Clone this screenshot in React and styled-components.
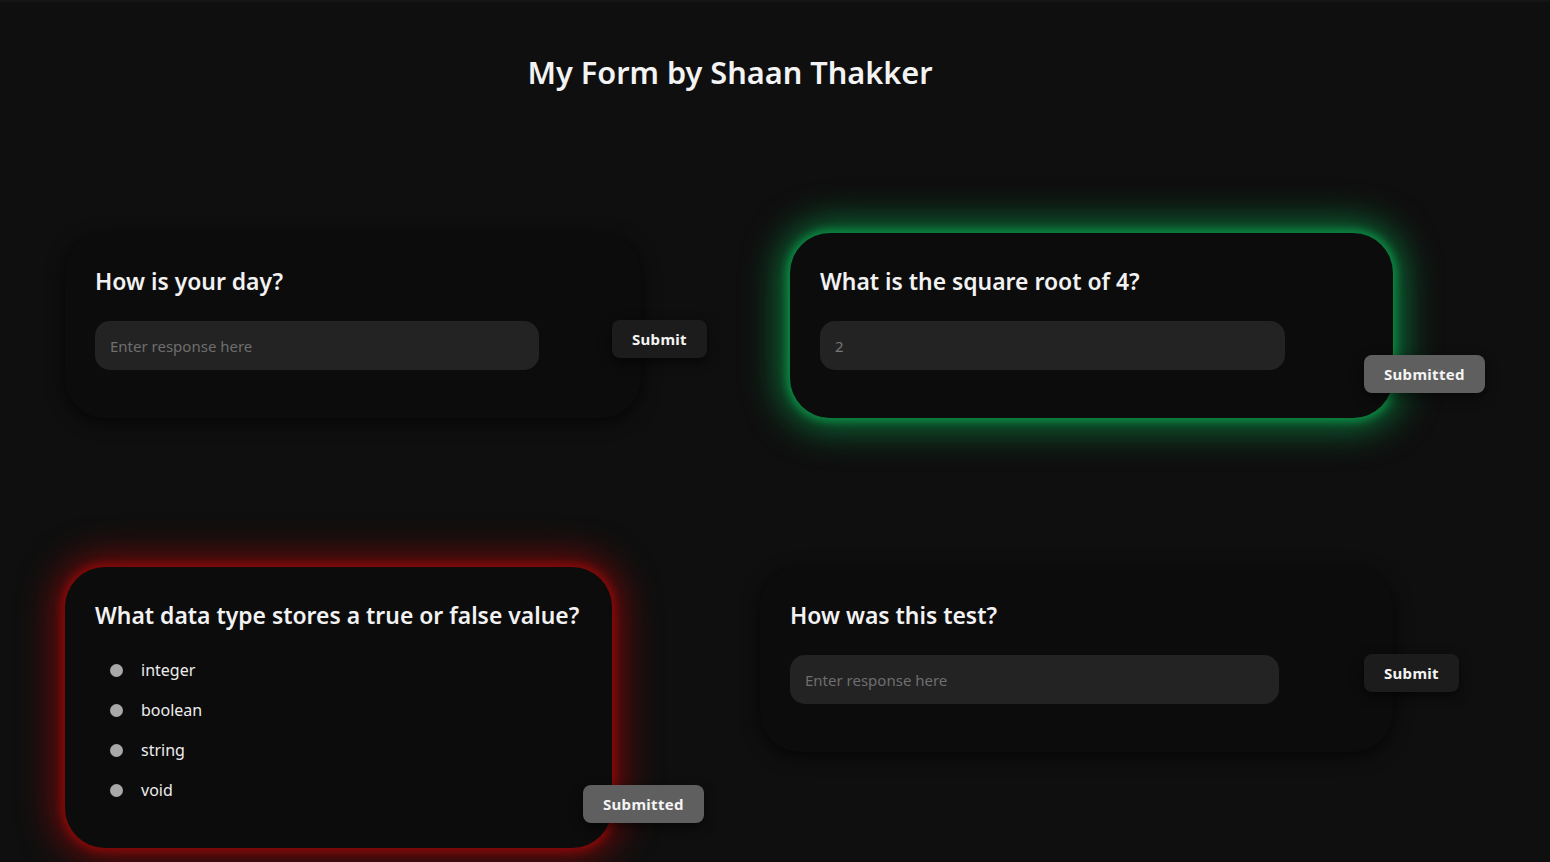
import React from 'react'
import styled, { createGlobalStyle, css } from 'styled-components'

const GlobalStyle = createGlobalStyle`
    * {
        box-sizing: border-box;
    }
    body {
        margin: 0;
        background-color: #0f0f0f;
        font-family: "Noto Sans", "Open Sans", sans-serif;
        color: #f2f2f2;
    }
`

const questions = [
    { id: 1, title: 'How is your day?', kind: 'text', width: 576, offset: 0, buttonTop: 87 },
    { id: 2, title: 'What is the square root of 4?', kind: 'text', value: '2', status: 'correct', width: 603, offset: 30, inputWidth: 465, buttonTop: 122 },
    { id: 3, title: 'What data type stores a true or false value?', kind: 'radio', options: ['integer', 'boolean', 'string', 'void'], status: 'wrong', width: 547, offset: 0, buttonTop: 218 },
    { id: 4, title: 'How was this test?', kind: 'text', width: 633, offset: 0, inputWidth: 489, buttonTop: 87 },
]

const App = () => {
    return (
        <>
            <GlobalStyle />
            <Page>
                <Title>My Form by Shaan Thakker</Title>
                <QuestionGrid>
                    {questions.map((q) => (
                        <Cell key={q.id} offset={q.offset}>
                            <Card width={q.width} status={q.status}>
                                <Question>{q.title}</Question>
                                {q.kind === 'text' ? (
                                    <ResponseInput
                                        width={q.inputWidth}
                                        placeholder='Enter response here'
                                        defaultValue={q.value}
                                        disabled={!!q.status}
                                    />
                                ) : (
                                    <OptionList>
                                        {q.options.map((opt) => (
                                            <Option key={opt}>
                                                <Dot />
                                                {opt}
                                            </Option>
                                        ))}
                                    </OptionList>
                                )}
                            </Card>
                            <SubmitButton top={q.buttonTop} done={!!q.status}>
                                {q.status ? 'Submitted' : 'Submit'}
                            </SubmitButton>
                        </Cell>
                    ))}
                </QuestionGrid>
            </Page>
        </>
    )
}

const Page = styled.div`
    min-height: 862px;
    padding: 45px 0 0 65px;
    border-top: 2px solid #151515;
`

const Title = styled.h1`
    width: 1330px;
    margin: 0;
    text-align: center;
    font-size: 30.7px;
    font-weight: 600;
    line-height: 50px;
    color: #f3f3f3;
`

const QuestionGrid = styled.div`
    display: grid;
    grid-template-columns: 695px 1fr;
    row-gap: 149px;
    align-items: start;
    margin-top: 136px;
`

const Cell = styled.div`
    display: flex;
    align-items: flex-start;
    margin-left: ${(p) => p.offset}px;
`

const glow = {
    correct: css`
        box-shadow: 0 0 36px 10px rgba(10, 135, 66, 0.85), 0 0 8px 3px rgba(14, 150, 74, 0.95);
    `,
    wrong: css`
        box-shadow: 0 0 36px 10px rgba(135, 8, 8, 0.85), 0 0 8px 3px rgba(150, 12, 12, 0.95);
    `,
}

const Card = styled.div`
    flex: none;
    width: ${(p) => p.width}px;
    padding: 30px 30px 38px;
    background-color: #0c0c0c;
    border-radius: 40px;
    box-shadow: 0 4px 18px rgba(0, 0, 0, 0.7);
    ${(p) => glow[p.status]}
`

const Question = styled.h2`
    margin: 0 0 20px;
    font-size: 22.9px;
    font-weight: 600;
    line-height: 38px;
    color: #f2f2f2;
`

const ResponseInput = styled.input`
    display: block;
    width: ${(p) => p.width || 444}px;
    height: 49px;
    margin-bottom: 10px;
    padding: 0 15px;
    border: none;
    border-radius: 15px;
    background-color: #232323;
    font-family: inherit;
    font-size: 15px;
    color: #777;
    outline: none;

    &::placeholder {
        color: #6e6e6e;
    }
`

const OptionList = styled.div`
    display: flex;
    flex-direction: column;
    margin-top: -5px;
`

const Option = styled.label`
    display: flex;
    align-items: center;
    gap: 18px;
    height: 40px;
    padding-left: 15px;
    font-size: 16px;
    color: #ececec;
`

const Dot = styled.span`
    width: 13px;
    height: 13px;
    border-radius: 50%;
    background-color: #a9a9a9;
`

const SubmitButton = styled.button`
    flex: none;
    position: relative;
    height: 38px;
    margin-top: ${(p) => p.top}px;
    margin-left: -29px;
    padding: 0 20px;
    border: none;
    border-radius: 8px;
    background-color: ${(p) => (p.done ? '#5f5f5f' : '#1c1c1c')};
    box-shadow: 0 4px 12px rgba(0, 0, 0, 0.6);
    font-family: inherit;
    font-size: 15px;
    font-weight: 700;
    letter-spacing: 0.3px;
    color: #f4f4f4;
    cursor: pointer;
`

export default App
